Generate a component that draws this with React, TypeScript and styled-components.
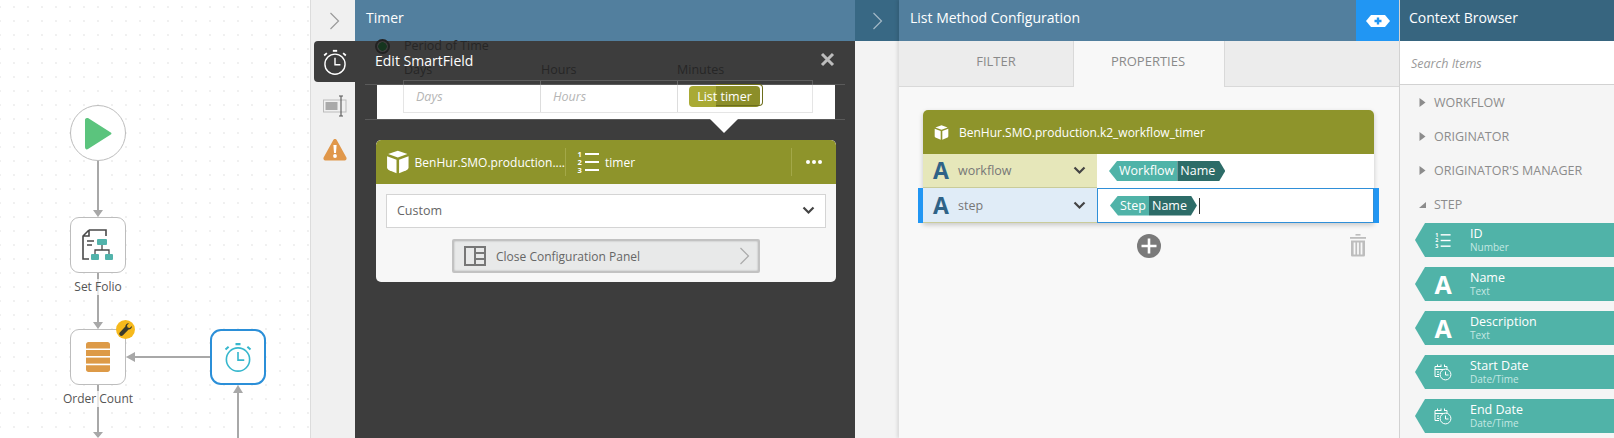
import React from 'react';
import styled, { createGlobalStyle } from 'styled-components';

const GlobalStyle = createGlobalStyle`
    html, body {
        margin: 0;
        padding: 0;
        background: #ffffff;
        font-family: "Open Sans", "Liberation Sans", sans-serif;
    }
    * { box-sizing: border-box; }
`;

const Page = styled.div`
    display: flex;
    width: 1614px;
    height: 438px;
    overflow: hidden;
`;

/* ---------- workflow canvas ---------- */

const Canvas = styled.div`
    position: relative;
    width: 310px;
    flex: none;
    background-color: #fff;
    background-image: radial-gradient(circle at 1px 1px, #f0f0f0 0.7px, transparent 1px);
    background-size: 14px 14px;
    background-position: 13px 6px;
`;

const Wires = styled.svg`
    position: absolute;
    inset: 0;
`;

const Node = styled.div<{ $x: number; $y: number; $active?: boolean; $round?: boolean }>`
    position: absolute;
    left: ${p => p.$x}px;
    top: ${p => p.$y}px;
    width: 56px;
    height: 56px;
    display: flex;
    align-items: center;
    justify-content: center;
    background: #fff;
    border: ${p => (p.$active ? '2px solid #2b8fd8' : '1px solid #bdbdbd')};
    border-radius: ${p => (p.$round ? '50%' : p.$active ? '11px' : '9px')};
`;

const NodeLabel = styled.div<{ $y: number }>`
    position: absolute;
    left: 98px;
    top: ${p => p.$y}px;
    transform: translateX(-50%);
    font-size: 12px;
    line-height: 16px;
    color: #555;
    white-space: nowrap;
    background: rgba(255, 255, 255, 0.75);
`;

const Badge = styled.div`
    position: absolute;
    left: 116px;
    top: 320px;
    width: 19px;
    height: 19px;
    border-radius: 50%;
    background: #f6b91c;
    display: flex;
    align-items: center;
    justify-content: center;
`;

/* ---------- timer panel ---------- */

const TimerColumn = styled.div`
    display: flex;
    width: 545px;
    flex: none;
`;

const Rail = styled.div`
    width: 45px;
    flex: none;
    display: flex;
    flex-direction: column;
    align-items: flex-end;
    background: #f0f0f0;
    border-left: 1px solid #dcdcdc;
    box-shadow: -2px 0 3px rgba(0, 0, 0, 0.12);
`;

const RailToggle = styled.div`
    width: 100%;
    height: 41px;
    display: flex;
    align-items: center;
    justify-content: center;
    padding: 0 0 0 3px;
`;

const RailItem = styled.div<{ $active?: boolean }>`
    width: 41px;
    height: 41px;
    margin-bottom: 3px;
    display: flex;
    align-items: center;
    justify-content: center;
    background: ${p => (p.$active ? '#3d3d3d' : 'transparent')};
    border-radius: 4px 0 0 4px;
`;

const TimerPanel = styled.div`
    flex: 1;
    display: flex;
    flex-direction: column;
`;

const Bar = styled.div<{ $bg: string; $inset?: number }>`
    height: 41px;
    flex: none;
    display: flex;
    align-items: center;
    padding: 0 11px 6px ${p => p.$inset ?? 11}px;
    background: ${p => p.$bg};
    color: #fff;
    font-size: 14px;
`;

const Overlay = styled.div`
    position: relative;
    flex: 1;
    background: #3d3d3d;
    padding: 0 10px;
`;

const GhostRadio = styled.div`
    position: absolute;
    left: 20px;
    top: -2px;
    width: 15px;
    height: 15px;
    border-radius: 50%;
    border: 2px solid #222;
    background: radial-gradient(circle, #16351f 0 4px, transparent 4.5px);
`;

const GhostText = styled.div<{ $x: number; $y: number }>`
    position: absolute;
    left: ${p => p.$x}px;
    top: ${p => p.$y}px;
    font-size: 12.5px;
    line-height: 16px;
    color: #262626;
`;

const OverlayTitle = styled.div`
    position: relative;
    height: 44px;
    display: flex;
    align-items: center;
    justify-content: space-between;
    padding: 0 10px 4px 10px;
    border-bottom: 1px solid #5a5a5a;
    color: #fff;
    font-size: 14px;
`;

const CloseCross = styled.svg`
    margin-top: -3px;
`;

const Band = styled.div`
    position: relative;
    height: 34px;
    margin: 0 0 0 12px;
    width: 458px;
    background: #fff;
`;

const GhostInputs = styled.div`
    position: absolute;
    left: 26px;
    top: -5px;
    width: 410px;
    height: 33px;
    display: grid;
    grid-template-columns: 136px 137px 1fr;
    border: 1px solid rgba(170, 170, 170, 0.3);
`;

const GhostInput = styled.div`
    display: flex;
    align-items: center;
    padding-left: 12px;
    border-left: 1px solid rgba(170, 170, 170, 0.4);
    font-size: 12.5px;
    font-style: italic;
    color: #b5b5b5;
    &:first-child { border-left: 0; }
`;

const ListPill = styled.div`
    position: absolute;
    left: 312px;
    top: 1px;
    width: 71px;
    height: 21px;
    display: flex;
    align-items: center;
    justify-content: center;
    border-radius: 4px;
    color: #fff;
    font-size: 12.5px;
    background: linear-gradient(90deg, #a9aa35 0 27px, #8c8e29 27px);
    &::after {
        content: '';
        position: absolute;
        left: 27px;
        right: -3px;
        top: -2px;
        bottom: 1px;
        border: 1px solid #6d6e1c;
        border-left: 0;
        border-radius: 0 4px 4px 0;
    }
`;

const Divider = styled.div`
    position: relative;
    height: 1px;
    background: #5a5a5a;
    &::after {
        content: '';
        position: absolute;
        left: 345px;
        top: 0;
        border-left: 14px solid transparent;
        border-right: 14px solid transparent;
        border-top: 14px solid #fff;
    }
`;

const ConfigCard = styled.div`
    width: 460px;
    height: 142px;
    margin: 20px 0 0 11px;
    background: #f7f7f7;
    border-radius: 5px;
    overflow: hidden;
`;

const OliveHead = styled.div<{ $h: number }>`
    height: ${p => p.$h}px;
    display: flex;
    align-items: center;
    background: #8e942b;
    color: #fff;
    font-size: 12px;
    border-radius: 5px 5px 0 0;
`;

const HeadCell = styled.div`
    height: 28px;
    display: flex;
    align-items: center;
    gap: 5px;
    padding-left: 10px;
    border-right: 1px solid #a3a848;
    width: 190px;
    overflow: hidden;
    white-space: nowrap;
`;

const MethodTitle = styled.div`
    display: flex;
    align-items: center;
    gap: 10px;
    padding-left: 11px;
    white-space: nowrap;
`;

const TimerCell = styled.div`
    flex: 1;
    height: 28px;
    display: flex;
    align-items: center;
    gap: 4px;
    padding-left: 11px;
    border-right: 1px solid #a3a848;
`;

const Dots = styled.div`
    width: 44px;
    display: flex;
    justify-content: center;
    gap: 2px;
    span {
        width: 4px;
        height: 4px;
        border-radius: 50%;
        background: #fff;
    }
`;

const SelectBox = styled.div`
    height: 34px;
    margin: 10px 10px 0;
    display: flex;
    align-items: center;
    justify-content: space-between;
    padding: 0 10px 2px;
    background: #fff;
    border: 1px solid #d4d4d4;
    font-size: 12.5px;
    color: #666;
`;

const CloseButton = styled.div`
    width: 308px;
    height: 34px;
    margin: 11px auto 0;
    display: flex;
    align-items: center;
    gap: 10px;
    padding: 0 8px 0 10px;
    background: #e8e9e9;
    border: 2px solid #c2c2c2;
    border-radius: 2px;
    box-shadow: inset 0 0 2px #aaa;
    font-size: 12px;
    color: #666;
    span { flex: 1; }
`;

/* ---------- list method panel ---------- */

const ListColumn = styled.div`
    display: flex;
    width: 544px;
    flex: none;
`;

const Strip = styled.div`
    width: 44px;
    flex: none;
    background: #f3f3f3;
`;

const StripHead = styled.div`
    height: 41px;
    display: flex;
    align-items: center;
    justify-content: center;
    background: #386884;
`;

const ListPanel = styled.div`
    flex: 1;
    display: flex;
    flex-direction: column;
    background: #f8f8f8;
    box-shadow: -2px 0 3px rgba(0, 0, 0, 0.1);
`;

const ListBar = styled(Bar)`
    justify-content: space-between;
    padding: 0 0 0 11px;
`;

const ListBarTitle = styled.span`
    padding-bottom: 6px;
`;

const AddContext = styled.div`
    width: 43px;
    height: 41px;
    display: flex;
    align-items: center;
    justify-content: center;
    background: #2196f3;
`;

const Tabs = styled.div`
    height: 46px;
    display: flex;
    background: #ececec;
    border-bottom: 1px solid #d9d9d9;
`;

const Tab = styled.div<{ $w: number; $on?: boolean }>`
    width: ${p => p.$w}px;
    display: flex;
    align-items: center;
    justify-content: center;
    padding-bottom: 6px;
    font-size: 13px;
    color: #8a8a8a;
    ${p => !p.$on && 'padding-left: 20px;'}
    ${p => p.$on && `
        height: 46px;
        padding-right: 2px;
        background: #f8f8f8;
        border-right: 1px solid #d9d9d9;
        border-left: 1px solid #d9d9d9;
    `}
`;

const ListBody = styled.div`
    padding: 23px 25px 0 24px;
`;

const MethodCard = styled.div`
    background: #fff;
    border-radius: 5px 5px 0 0;
    box-shadow: 0 2px 5px rgba(0, 0, 0, 0.2);
`;

const Row = styled.div<{ $selected?: boolean }>`
    position: relative;
    display: grid;
    grid-template-columns: 174px 1fr;
    height: ${p => (p.$selected ? 35 : 34)}px;
    ${p => p.$selected && `
        &::before, &::after {
            content: '';
            position: absolute;
            top: 0;
            bottom: 0;
            width: 5px;
            background: #2196f3;
        }
        &::before { left: -5px; }
        &::after { right: -5px; }
    `}
`;

const RowLabel = styled.div<{ $selected?: boolean }>`
    display: flex;
    align-items: center;
    padding: 0 11px 0 9px;
    background: ${p => (p.$selected ? '#e0ecf7' : '#e6e7ba')};
    border-bottom: 1px solid #c9cb9a;
    font-size: 12.5px;
    color: #777;
    span { flex: 1; padding-left: 8px; }
`;

const TypeLetter = styled.b<{ $light?: boolean }>`
    width: ${p => (p.$light ? 'auto' : '18px')};
    text-align: center;
    font-size: ${p => (p.$light ? 25 : 23)}px;
    line-height: 1;
    font-weight: 700;
    color: ${p => (p.$light ? '#fff' : '#2f6387')};
`;

const RowValue = styled.div<{ $selected?: boolean }>`
    display: flex;
    align-items: center;
    padding-left: 12px;
    background: #fff;
    border: ${p => (p.$selected ? '1px solid #2f8fd8' : '0')};
`;

const Token = styled.div`
    display: flex;
    height: 20px;
    font-size: 12.5px;
    line-height: 19px;
    color: #fff;
`;

const TokenHead = styled.div`
    padding: 0 3px 0 10px;
    background: #50b3a8;
    clip-path: polygon(8px 0, 100% 0, 100% 100%, 8px 100%, 0 50%);
`;

const TokenTail = styled.div`
    padding: 0 10px 0 3px;
    background: #2d6c68;
    clip-path: polygon(0 0, calc(100% - 6px) 0, 100% 50%, calc(100% - 6px) 100%, 0 100%);
`;

const Caret = styled.i`
    width: 1px;
    height: 16px;
    margin-left: 2px;
    background: #333;
`;

const CardActions = styled.div`
    position: relative;
    display: flex;
    justify-content: center;
    padding-top: 11px;
`;

const Trash = styled.div`
    position: absolute;
    right: 8px;
    top: 11px;
`;

/* ---------- context browser ---------- */

const ContextBrowser = styled.div`
    flex: 1;
    display: flex;
    flex-direction: column;
    background: #f5f5f5;
    border-left: 1px solid #d2d2d2;
`;

const SearchBox = styled.div`
    height: 44px;
    display: flex;
    align-items: center;
    padding: 1px 0 0 11px;
    background: #fff;
    border-bottom: 1px solid #d2d2d2;
    font-size: 12.5px;
    font-style: italic;
    color: #9a9a9a;
`;

const TreeRow = styled.div`
    height: 34px;
    display: flex;
    align-items: center;
    gap: 8px;
    padding-left: 19px;
    font-size: 12.5px;
    color: #8c8c8c;
`;

const Items = styled.div`
    display: flex;
    flex-direction: column;
    gap: 10px;
    padding: 2px 0 0 15px;
`;

const Item = styled.div`
    height: 34px;
    display: flex;
    align-items: center;
    background: #50b3a8;
    clip-path: polygon(10px 0, 100% 0, 100% 100%, 10px 100%, 0 50%);
    color: #fff;
`;

const ItemIcon = styled.div`
    width: 55px;
    flex: none;
    display: flex;
    justify-content: center;
    padding-left: 1px;
`;

const ItemName = styled.div`
    font-size: 12.5px;
    line-height: 15px;
`;

const ItemType = styled.div`
    font-size: 10px;
    line-height: 13px;
    color: #c4e8e3;
`;

/* ---------- drawings ---------- */

const Chevron = ({ color = '#9a9a9a' }: { color?: string }) => (
    <svg width="11" height="18" viewBox="0 0 11 18" fill="none">
        <path d="M1.5 1 L9.5 9 L1.5 17" stroke={color} strokeWidth="1.2" />
    </svg>
);

const ChevronDown = () => (
    <svg width="13" height="9" viewBox="0 0 13 9" fill="none">
        <path d="M1.5 1.5 L6.5 6.5 L11.5 1.5" stroke="#444" strokeWidth="2.2" />
    </svg>
);

const ClockIcon = ({ color = '#fff', size = 26 }: { color?: string; size?: number }) => (
    <svg width={size} height={size} viewBox="0 0 24 24" fill="none" stroke={color} strokeWidth="1.3">
        <circle cx="12" cy="14" r="9.3" />
        <path d="M12 8 V14.5 H17" />
        <path d="M10 1.7 H14" strokeWidth="1.8" />
        <path d="M2 6 L4.5 3.8 M22 6 L19.5 3.8" strokeWidth="1.6" />
    </svg>
);

const FieldIcon = () => (
    <svg width="24" height="22" viewBox="0 0 24 22" fill="none">
        <rect x="0.5" y="5" width="22.5" height="12" fill="none" stroke="#bcbcbc" />
        <rect x="2.5" y="7" width="12" height="8" fill="#a9a9a9" />
        <path d="M16 1 H20 M18 1 V21 M16 21 H20" stroke="#555" strokeWidth="1.1" />
    </svg>
);

const WarningIcon = () => (
    <svg width="24" height="23" viewBox="0 0 24 23">
        <path d="M12 1 C13 1 13.6 1.6 14 2.4 L23.4 19.6 C24 21 23.2 22.5 21.6 22.5 H2.4 C0.8 22.5 0 21 0.6 19.6 L10 2.4 C10.4 1.6 11 1 12 1 Z" fill="#e0974a" />
        <path d="M10.4 7 H13.6 L13 15 H11 Z" fill="#fff" />
        <circle cx="12" cy="18" r="1.9" fill="#fff" />
    </svg>
);

const CubeIcon = ({ size = 24 }: { size?: number }) => (
    <svg width={size} height={size} viewBox="0 0 22 22" fill="#fff">
        <path d="M11 0.5 L20 3.6 L11 6.8 L2 3.6 Z" />
        <path d="M1 5.6 L9.8 8.8 V21.5 L3 18.8 C1.8 18.3 1 17.4 1 16 Z" />
        <path d="M21 5.6 L12.2 8.8 V21.5 L19 18.8 C20.2 18.3 21 17.4 21 16 Z" />
    </svg>
);

const NumberListIcon = ({ width = 24 }: { width?: number }) => (
    <svg width={width} height={width} viewBox="0 0 24 24" fill="#fff" fontFamily="Open Sans, sans-serif" fontWeight="700" fontSize="7.5">
        <text x="0.5" y="6.5">1</text>
        <text x="0.5" y="14.5">2</text>
        <text x="0.5" y="22.5">3</text>
        <rect x="8" y="3" width="14" height="2" />
        <rect x="8" y="11" width="14" height="2" />
        <rect x="8" y="19" width="14" height="2" />
    </svg>
);

const DateTimeIcon = () => (
    <svg width="18" height="18" viewBox="0 0 18 18" fill="none" stroke="#fff" strokeWidth="1">
        <path d="M7 3.5 H1 V13.5 H5" />
        <path d="M1 6.5 H13 V3.5 H11" />
        <path d="M3.5 1.5 V4 M7 1.5 V4 M10.5 1.5 V4" />
        <path d="M3 9 H5 M3 11.5 H5" />
        <circle cx="11.5" cy="11.5" r="5.4" fill="#50b3a8" />
        <path d="M11.5 8.5 V12 H14.5" />
    </svg>
);

const PanelIcon = () => (
    <svg width="22" height="20" viewBox="0 0 22 20" fill="none" stroke="#777" strokeWidth="2">
        <rect x="1" y="1" width="20" height="18" />
        <path d="M11 1 V19 M11 7 H21 M11 13 H21" />
    </svg>
);

const AddTokenIcon = () => (
    <svg width="24" height="12" viewBox="0 0 24 12">
        <path d="M5 0 H19 L24 6 L19 12 H5 L0 6 Z" fill="#fff" />
        <path d="M12 2.5 V9.5 M8.5 6 H15.5" stroke="#2196f3" strokeWidth="2.4" />
    </svg>
);

const PlusIcon = () => (
    <svg width="24" height="24" viewBox="0 0 24 24">
        <circle cx="12" cy="12" r="12" fill="#7a7a7a" />
        <path d="M12 4.5 V19.5 M4.5 12 H19.5" stroke="#fff" strokeWidth="2.6" />
    </svg>
);

const TrashIcon = () => (
    <svg width="16" height="23" viewBox="0 0 16 23" fill="#bdbdbd">
        <rect x="5.5" y="0" width="5" height="1.6" />
        <rect x="0" y="3" width="16" height="1.8" />
        <path d="M1 6.5 H15 V21 C15 22 14.4 22.5 13.5 22.5 H2.5 C1.6 22.5 1 22 1 21 Z M3.6 8.5 V20.5 H5.4 V8.5 Z M7.1 8.5 V20.5 H8.9 V8.5 Z M10.6 8.5 V20.5 H12.4 V8.5 Z" fillRule="evenodd" />
    </svg>
);

const TreeArrow = ({ open }: { open?: boolean }) => (
    <svg width="7" height="9" viewBox="0 0 7 9" fill="#8c8c8c">
        {open ? <path d="M7 2 V8 H0 Z" /> : <path d="M0.5 0 L6.5 4.5 L0.5 9 Z" />}
    </svg>
);

const contextItems = [
    { name: 'ID', type: 'Number', icon: 'number' },
    { name: 'Name', type: 'Text', icon: 'text' },
    { name: 'Description', type: 'Text', icon: 'text' },
    { name: 'Start Date', type: 'Date/Time', icon: 'date' },
    { name: 'End Date', type: 'Date/Time', icon: 'date' },
];

const App: React.FC = () => {
    return (
        <Page>
            <GlobalStyle />
            <Canvas>
                <Wires width="310" height="438" fill="#a8a8a8" stroke="none">
                    <path d="M98 160 V212 M98 273 V324 M98 385 V432 M210 357 H132 M238 390 V438" stroke="#a8a8a8" strokeWidth="2" />
                    <path d="M93 210 H103 L98 217 Z M93 322 H103 L98 329 Z M93 432 H103 L98 438 Z M135 352 V362 L126 357 Z M233 393 H243 L238 385 Z" />
                </Wires>
                <Node $x={70} $y={105} $round>
                    <svg width="28" height="33" viewBox="0 0 28 33">
                        <path d="M3 1 C1.5 1 1 2 1 3 V30 C1 32 2.5 33 4 32 L26 18 C28 17 28 16 26 15 L4 1 Z" fill="#5bc47d" />
                    </svg>
                </Node>
                <Node $x={70} $y={217}>
                    <svg width="32" height="32" viewBox="0 0 32 32" fill="none">
                        <path d="M7 1 H24 V7 M1 9 V30 H7 M7 1 L1 7 V10 M7 1 V7 H1" stroke="#4a4a4a" strokeWidth="1.6" />
                        <path d="M5 12 H12 M5 16 H10" stroke="#4a4a4a" strokeWidth="1.4" />
                        <rect x="15" y="10" width="10" height="6" rx="1" fill="#52b3ab" />
                        <path d="M20 16 V21 M13 25 V21 H27 V25" stroke="#4a4a4a" strokeWidth="1.3" />
                        <rect x="9" y="25" width="8" height="6" rx="1" fill="#52b3ab" />
                        <rect x="23" y="25" width="8" height="6" rx="1" fill="#52b3ab" />
                    </svg>
                </Node>
                <NodeLabel $y={279}>Set Folio</NodeLabel>
                <Node $x={70} $y={329}>
                    <svg width="24" height="30" viewBox="0 0 24 30" fill="#dd9a47">
                        <path d="M2.5 0 H21.5 C23 0 24 1 24 2.5 V6.4 H0 V2.5 C0 1 1 0 2.5 0 Z" />
                        <rect y="8" width="24" height="6" />
                        <rect y="15.6" width="24" height="6" />
                        <path d="M0 23.2 H24 V27.5 C24 29 23 30 21.5 30 H2.5 C1 30 0 29 0 27.5 Z" />
                    </svg>
                </Node>
                <NodeLabel $y={391}>Order Count</NodeLabel>
                <Badge>
                    <svg width="13" height="13" viewBox="0 0 13 13" fill="#3a3a2a">
                        <path d="M12.8 3 C13.2 5 11.6 6.8 9.6 6.6 L4 12.2 C3 13.2 1.6 13.2 0.8 12.2 C0 11.4 0 10 1 9.2 L6.4 3.6 C6.2 1.6 8 -0.2 10 0.2 L8 2.2 L8.6 4.4 L10.8 5 Z" />
                    </svg>
                </Badge>
                <Node $x={210} $y={329} $active>
                    <ClockIcon color="#36b7cd" size={30} />
                </Node>
            </Canvas>

            <TimerColumn>
                <Rail>
                    <RailToggle><Chevron /></RailToggle>
                    <RailItem $active><ClockIcon /></RailItem>
                    <RailItem><FieldIcon /></RailItem>
                    <RailItem><WarningIcon /></RailItem>
                </Rail>
                <TimerPanel>
                    <Bar $bg="#527f9e">Timer</Bar>
                    <Overlay>
                        <GhostRadio />
                        <GhostText $x={49} $y={-3}>Period of Time</GhostText>
                        <GhostText $x={49} $y={21}>Days</GhostText>
                        <GhostText $x={186} $y={21}>Hours</GhostText>
                        <GhostText $x={322} $y={21}>Minutes</GhostText>
                        <OverlayTitle>
                            Edit SmartField
                            <CloseCross width="15" height="15" viewBox="0 0 15 15">
                                <path d="M2 2 L13 13 M13 2 L2 13" stroke="#bdbdbd" strokeWidth="3" />
                            </CloseCross>
                        </OverlayTitle>
                        <Band>
                            <GhostInputs>
                                <GhostInput>Days</GhostInput>
                                <GhostInput>Hours</GhostInput>
                                <GhostInput />
                            </GhostInputs>
                            <ListPill>List timer</ListPill>
                        </Band>
                        <Divider />
                        <ConfigCard>
                            <OliveHead $h={44}>
                                <HeadCell>
                                    <CubeIcon />
                                    BenHur.SMO.production....
                                </HeadCell>
                                <TimerCell>
                                    <NumberListIcon />
                                    timer
                                </TimerCell>
                                <Dots><span /><span /><span /></Dots>
                            </OliveHead>
                            <SelectBox>
                                Custom
                                <ChevronDown />
                            </SelectBox>
                            <CloseButton>
                                <PanelIcon />
                                <span>Close Configuration Panel</span>
                                <Chevron color="#aaa" />
                            </CloseButton>
                        </ConfigCard>
                    </Overlay>
                </TimerPanel>
            </TimerColumn>

            <ListColumn>
                <Strip>
                    <StripHead><Chevron color="#a3b9c6" /></StripHead>
                </Strip>
                <ListPanel>
                    <ListBar $bg="#527f9e">
                        <ListBarTitle>List Method Configuration</ListBarTitle>
                        <AddContext><AddTokenIcon /></AddContext>
                    </ListBar>
                    <Tabs>
                        <Tab $w={174}>FILTER</Tab>
                        <Tab $w={152} $on>PROPERTIES</Tab>
                    </Tabs>
                    <ListBody>
                        <MethodCard>
                            <OliveHead $h={44}>
                                <MethodTitle>
                                    <CubeIcon size={15} />
                                    BenHur.SMO.production.k2_workflow_timer
                                </MethodTitle>
                            </OliveHead>
                            <Row>
                                <RowLabel>
                                    <TypeLetter>A</TypeLetter>
                                    <span>workflow</span>
                                    <ChevronDown />
                                </RowLabel>
                                <RowValue>
                                    <Token>
                                        <TokenHead>Workflow</TokenHead>
                                        <TokenTail>Name</TokenTail>
                                    </Token>
                                </RowValue>
                            </Row>
                            <Row $selected>
                                <RowLabel $selected>
                                    <TypeLetter>A</TypeLetter>
                                    <span>step</span>
                                    <ChevronDown />
                                </RowLabel>
                                <RowValue $selected>
                                    <Token>
                                        <TokenHead>Step</TokenHead>
                                        <TokenTail>Name</TokenTail>
                                    </Token>
                                    <Caret />
                                </RowValue>
                            </Row>
                        </MethodCard>
                        <CardActions>
                            <PlusIcon />
                            <Trash><TrashIcon /></Trash>
                        </CardActions>
                    </ListBody>
                </ListPanel>
            </ListColumn>

            <ContextBrowser>
                <Bar $bg="#37657f" $inset={9}>Context Browser</Bar>
                <SearchBox>Search Items</SearchBox>
                <div>
                    <TreeRow><TreeArrow />WORKFLOW</TreeRow>
                    <TreeRow><TreeArrow />ORIGINATOR</TreeRow>
                    <TreeRow><TreeArrow />ORIGINATOR'S MANAGER</TreeRow>
                    <TreeRow><TreeArrow open />STEP</TreeRow>
                </div>
                <Items>
                    {contextItems.map(item => (
                        <Item key={item.name}>
                            <ItemIcon>
                                {item.icon === 'number' && <NumberListIcon width={17} />}
                                {item.icon === 'text' && <TypeLetter $light>A</TypeLetter>}
                                {item.icon === 'date' && <DateTimeIcon />}
                            </ItemIcon>
                            <div>
                                <ItemName>{item.name}</ItemName>
                                <ItemType>{item.type}</ItemType>
                            </div>
                        </Item>
                    ))}
                </Items>
            </ContextBrowser>
        </Page>
    );
};

export default App;
